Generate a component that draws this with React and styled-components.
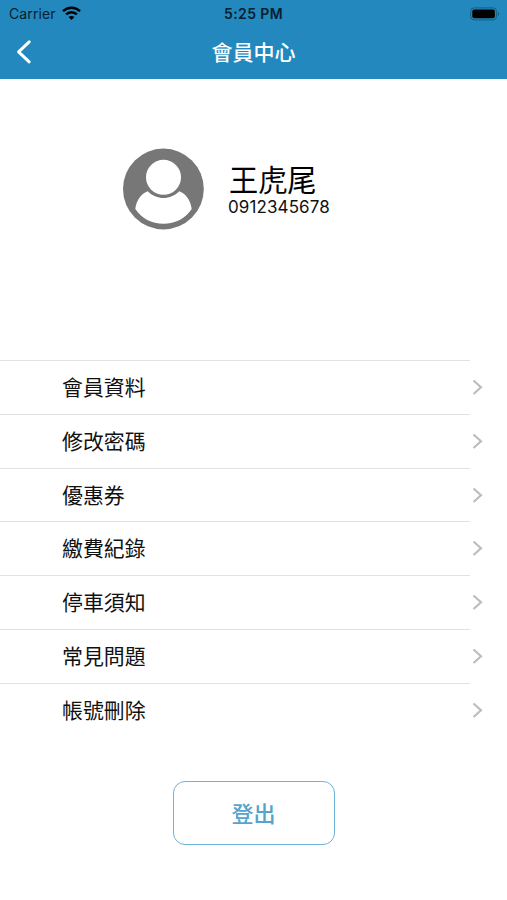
import React from "react";
import styled, { createGlobalStyle } from "styled-components";

const GlobalStyle = createGlobalStyle`
  * { box-sizing: border-box; }
  body {
    margin: 0;
    background: #fff;
    color: #111;
    font-family: Inter, "Noto Sans CJK TC", sans-serif;
  }
`;

const Screen = styled.main`
  display: flex;
  flex-direction: column;
  width: 507px;
  height: 900px;
  overflow: hidden;
  background: #fff;
`;

const Header = styled.header`
  height: 79px;
  background: #2388bd;
`;

const StatusBar = styled.div`
  display: grid;
  grid-template-columns: 1fr auto 1fr;
  align-items: center;
  height: 27px;
  padding: 0 7px 0 9px;
  color: #07202f;
`;

const Carrier = styled.div`
  display: flex;
  align-items: center;
  gap: 6px;
  font-size: 14px;
  letter-spacing: 0.12px;
  line-height: 27px;
`;

const Clock = styled.div`
  margin-right: 2px;
  padding-top: 1px;
  font-size: 14px;
  font-weight: 600;
  letter-spacing: 0.4px;
  line-height: 26px;
`;

const Battery = styled.svg`
  justify-self: end;
`;

const NavBar = styled.nav`
  display: grid;
  grid-template-columns: 48px 1fr 48px;
  align-items: center;
  height: 50px;
`;

const BackButton = styled.button`
  display: flex;
  padding: 0 0 0 15px;
  border: 0;
  background: none;
`;

const Title = styled.h1`
  margin: 0;
  padding-top: 2px;
  color: #fff;
  font-size: 21px;
  font-weight: 500;
  line-height: 30px;
  text-align: center;
`;

const Profile = styled.section`
  display: flex;
  align-items: flex-start;
  gap: 24px;
  height: 281px;
  padding: 69px 0 0 122px;
`;

const ProfileText = styled.div`
  padding-top: 15px;
`;

const Name = styled.div`
  color: #000;
  font-size: 29.2px;
  line-height: 36px;
  padding-left: 1px;
`;

const Phone = styled.div`
  margin-top: -1px;
  font-size: 17px;
  letter-spacing: 0.1px;
  line-height: 18px;
`;

const Menu = styled.ul`
  margin: 0;
  padding: 0;
  list-style: none;
`;

const MenuItem = styled.li`
  display: flex;
  align-items: stretch;
  height: 53.8px;
`;

const MenuLabel = styled.span`
  width: 470px;
  padding: 12px 0 0 62px;
  border-top: 1.5px solid #e2e2e2;
  color: #111;
  font-size: 20.9px;
  line-height: 30px;
`;

const RowChevron = styled.svg`
  margin: 19px 0 0 1px;
`;

const LogoutButton = styled.button`
  align-self: center;
  width: 162px;
  height: 64px;
  margin: 44px 0 0;
  padding: 0 0 1px;
  border: 1.5px solid #6db2d8;
  border-radius: 12px;
  background: #fff;
  color: #55a3cf;
  font-family: inherit;
  font-size: 22px;
  font-weight: 500;
`;

const items = ["會員資料", "修改密碼", "優惠券", "繳費紀錄", "停車須知", "常見問題", "帳號刪除"];

function WifiIcon() {
  return (
    <svg width="19" height="15" viewBox="0 0 19 15" fill="none" stroke="#000" strokeWidth="2.5">
      <path d="M1 5.2C5.8.6 13.2.6 18 5.2" />
      <path d="M4.1 8.4c3.1-3 7.7-3 10.8 0" />
      <path d="M6.6 11.1 9.5 14.1l2.9-3c-1.7-1.5-4.1-1.5-5.8 0Z" fill="#000" stroke="none" />
    </svg>
  );
}

function BatteryIcon() {
  return (
    <Battery width="30" height="14" viewBox="0 0 30 14">
      <rect x=".6" y=".9" width="26" height="12" rx="3.6" fill="none" stroke="#145e86" />
      <rect x="2.3" y="2.6" width="22.6" height="8.6" rx="2" fill="#000" />
      <path d="M27.9 4.8v4.4c1.5-.6 1.5-3.8 0-4.4Z" fill="#145e86" />
    </Battery>
  );
}

function AvatarIcon() {
  return (
    <svg width="82" height="82" viewBox="0 0 82 82">
      <circle cx="41.4" cy="41" r="40.4" fill="#777" />
      <circle cx="41.5" cy="29.3" r="17.5" fill="#fff" />
      <path
        d="M25.7 43.3c8.8 9 22.8 9 31.6 0 7.2 2.7 11.5 10 12.4 17.8-6.2 9.5-16.2 14.7-28.2 14.7S19.5 70.6 13.3 61.1C14.2 53.3 18.5 46 25.7 43.3Z"
        fill="#fff"
      />
    </svg>
  );
}

export default function App() {
  return (
    <Screen>
      <GlobalStyle />
      <Header>
        <StatusBar>
          <Carrier>Carrier <WifiIcon /></Carrier>
          <Clock>5:25 PM</Clock>
          <BatteryIcon />
        </StatusBar>
        <NavBar>
          <BackButton aria-label="返回">
            <svg width="18" height="26" viewBox="0 0 18 26" fill="none" stroke="#fff" strokeWidth="3" strokeLinecap="round" strokeLinejoin="round">
              <path d="M14.2 2.8 3.6 12.8l10.6 10" />
            </svg>
          </BackButton>
          <Title>會員中心</Title>
        </NavBar>
      </Header>
      <Profile>
        <AvatarIcon />
        <ProfileText>
          <Name>王虎尾</Name>
          <Phone>0912345678</Phone>
        </ProfileText>
      </Profile>
      <Menu>
        {items.map((label) => (
          <MenuItem key={label}>
            <MenuLabel>{label}</MenuLabel>
            <RowChevron width="13" height="17" viewBox="0 0 13 17" fill="none" stroke="#bdbdbd" strokeWidth="2.2">
              <path d="M2.5 1.5 10 8.2 2.5 15" />
            </RowChevron>
          </MenuItem>
        ))}
      </Menu>
      <LogoutButton>登出</LogoutButton>
    </Screen>
  );
}
